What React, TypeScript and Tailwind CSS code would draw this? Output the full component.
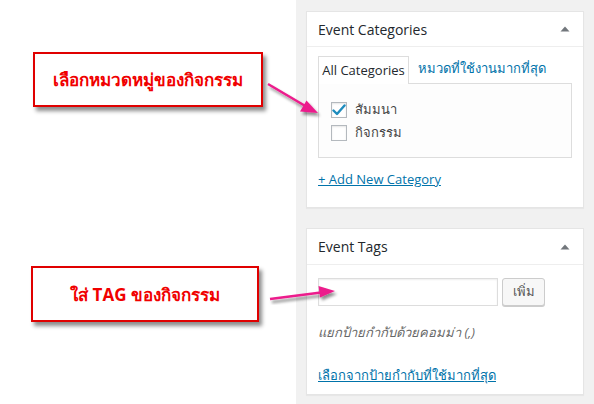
import React from "react";

const Tri = () => (
  <svg width="10" height="6" viewBox="0 0 10 6" className="block">
    <path d="M0.5 5.5 L5 0.5 L9.5 5.5 Z" fill="#72777c" />
  </svg>
);

const Check = ({ checked }: { checked?: boolean }) => (
  <div className="w-4 h-4 border border-[#b4b9be] bg-white shadow-[inset_0_1px_2px_rgba(0,0,0,0.1)] flex items-center justify-center">
    {checked && (
      <svg width="14" height="12" viewBox="0 0 14 12">
        <path d="M1.5 6.5 L5 10 L12.5 1.5" stroke="#1e8cbe" strokeWidth="2.4" fill="none" strokeLinecap="round" strokeLinejoin="round" />
      </svg>
    )}
  </div>
);

export default function App() {
  const font = { fontFamily: '"Open Sans", "Noto Sans", sans-serif' };
  return (
    <div className="relative w-[594px] h-[404px] flex bg-white overflow-hidden" style={font}>
      {/* left annotation area */}
      <div className="w-[296px] shrink-0 bg-white flex flex-col">
        <div className="ml-[33px] mt-[52px] w-[230px] h-[55px] border-2 border-[#e00000] bg-white shadow-[3px_4px_4px_rgba(0,0,0,0.45)] flex items-center justify-center">
          <span className="text-[17px] font-bold text-[#f00000] leading-none">เลือกหมวดหมู่ของกิจกรรม</span>
        </div>
        <div className="ml-[31px] mt-[159px] w-[228px] h-[56px] border-2 border-[#e00000] bg-white shadow-[3px_4px_4px_rgba(0,0,0,0.45)] flex items-center justify-center">
          <span className="text-[17px] font-bold text-[#f00000] leading-none">ใส่ TAG ของกิจกรรม</span>
        </div>
      </div>

      {/* right sidebar */}
      <div className="flex-1 bg-[#f1f1f1] pl-[10px] pt-[11px] flex flex-col">
        {/* Event Categories */}
        <div className="w-[278px] h-[197px] bg-white border border-[#e5e5e5] shadow-[0_1px_1px_rgba(0,0,0,0.04)] flex flex-col">
          <div className="h-[35px] border-b border-[#eeeeee] flex items-center justify-between pl-[11px] pr-[13px]">
            <span className="text-[14px] text-[#23282d]">Event Categories</span>
            <Tri />
          </div>
          <div className="pl-[11px] pt-[8px] flex flex-col">
            <div className="flex items-end h-[28px]">
              <div className="h-[28px] w-[91px] border border-[#dddddd] border-b-0 bg-white flex items-center justify-center relative z-10 -mb-px">
                <span className="text-[13px] text-[#23282d]">All Categories</span>
              </div>
              <div className="h-[28px] flex items-center pl-[9px]">
                <span className="text-[13px] text-[#0073aa]">หมวดที่ใช้งานมากที่สุด</span>
              </div>
            </div>
            <div className="w-[254px] h-[75px] border border-[#dddddd] bg-[#fdfdfd] pl-[12px] pt-[18px] flex flex-col gap-[7px]">
              <div className="flex items-center gap-[8px] h-4">
                <Check checked />
                <span className="text-[13px] text-[#444]">สัมมนา</span>
              </div>
              <div className="flex items-center gap-[8px] h-4">
                <Check />
                <span className="text-[13px] text-[#444]">กิจกรรม</span>
              </div>
            </div>
            <div className="mt-[8px]">
              <span className="text-[13px] text-[#0073aa] underline">+ Add New Category</span>
            </div>
          </div>
        </div>

        {/* Event Tags */}
        <div className="mt-[20px] w-[278px] h-[167px] bg-white border border-[#e5e5e5] shadow-[0_1px_1px_rgba(0,0,0,0.04)] flex flex-col">
          <div className="h-[36px] border-b border-[#eeeeee] flex items-center justify-between pl-[11px] pr-[13px]">
            <span className="text-[14px] text-[#23282d]">Event Tags</span>
            <Tri />
          </div>
          <div className="pl-[11px] pt-[13px] flex flex-col">
            <div className="flex items-center gap-[4px]">
              <div className="w-[180px] h-[28px] border border-[#dddddd] bg-white shadow-[inset_0_1px_2px_rgba(0,0,0,0.07)]" />
              <div className="w-[43px] h-[28px] border border-[#cccccc] bg-[#f7f7f7] rounded-[3px] shadow-[0_1px_0_#ccc] flex items-center justify-center">
                <span className="text-[13px] text-[#555]">เพิ่ม</span>
              </div>
            </div>
            <div className="mt-[17px] h-[20px] flex items-center">
              <span className="text-[13px] italic text-[#666]">แยกป้ายกำกับด้วยคอมม่า (,)</span>
            </div>
            <div className="mt-[23px] h-[20px] flex items-center">
              <span className="text-[13px] text-[#0073aa] underline">เลือกจากป้ายกำกับที่ใช้มากที่สุด</span>
            </div>
          </div>
        </div>
      </div>

      {/* arrows */}
      <svg className="absolute inset-0 pointer-events-none" width="594" height="404" viewBox="0 0 594 404">
        <defs>
          <filter id="sh" x="-20%" y="-20%" width="140%" height="160%">
            <feGaussianBlur in="SourceAlpha" stdDeviation="1.5" />
            <feOffset dx="2" dy="3" result="b" />
            <feComponentTransfer><feFuncA type="linear" slope="0.45" /></feComponentTransfer>
            <feMerge><feMergeNode /><feMergeNode in="SourceGraphic" /></feMerge>
          </filter>
        </defs>
        <g filter="url(#sh)">
          <line x1="268" y1="84" x2="307" y2="107" stroke="#ec1c8c" strokeWidth="2.5" />
          <path d="M318 113 L300 111.5 L306.5 100.5 Z" fill="#ec1c8c" />
        </g>
        <g filter="url(#sh)">
          <line x1="270" y1="299" x2="321" y2="292.5" stroke="#ec1c8c" strokeWidth="2.5" />
          <path d="M335 291 L318.5 286 L320 297.5 Z" fill="#ec1c8c" />
        </g>
      </svg>
    </div>
  );
}
